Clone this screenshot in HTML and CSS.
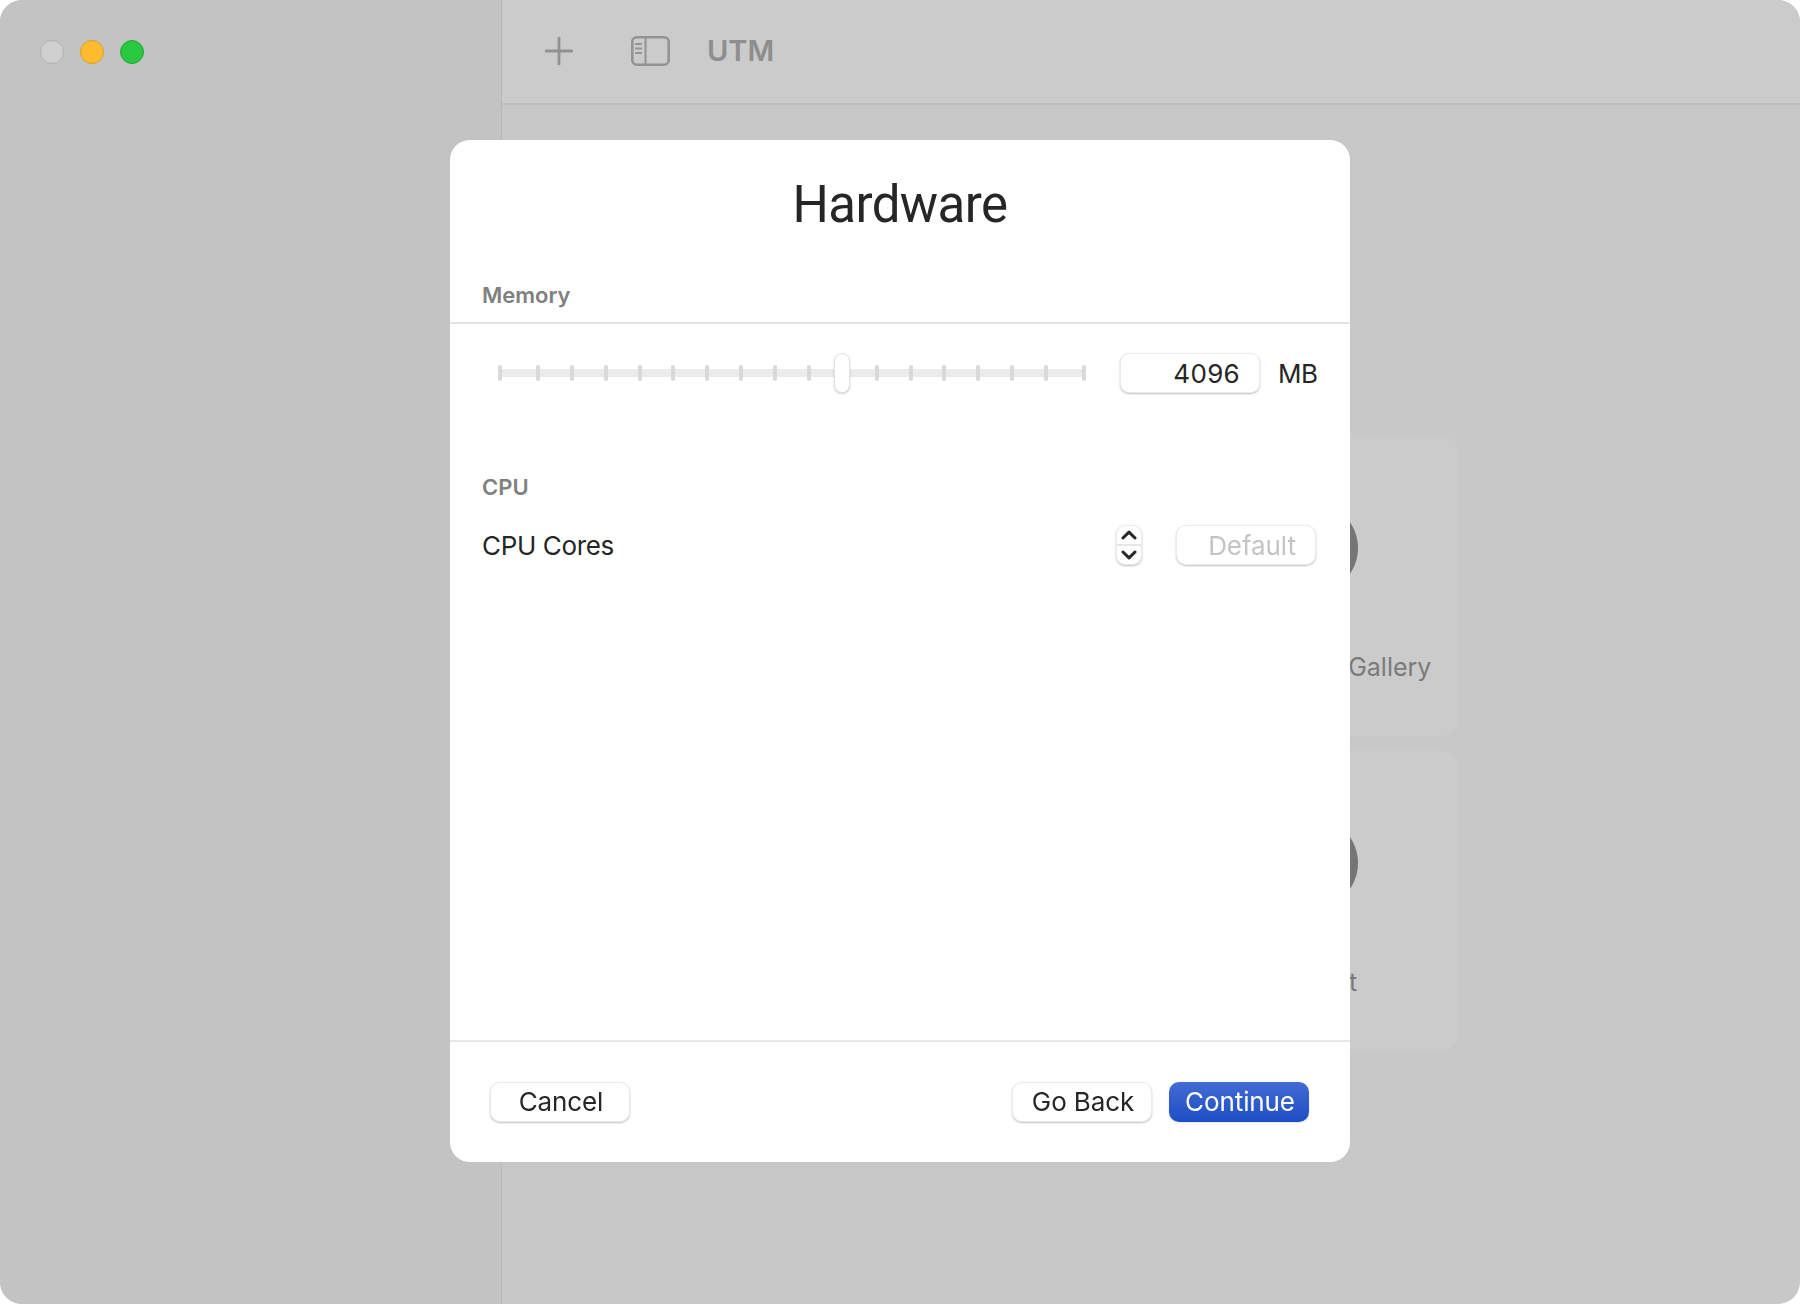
FILE: index.html
```html
<!DOCTYPE html>
<html lang="en">

<head>
    <meta charset="UTF-8">
    <title>UTM</title>
    <link rel="stylesheet" href="styles.css">
</head>

<body>

    <div class="window">
        <div class="sidebar">
            <div class="traffic">
                <span class="light light-gray"></span>
                <span class="light light-yellow"></span>
                <span class="light light-green"></span>
            </div>
        </div>

        <div class="main">
            <div class="toolbar">
                <svg class="icon-plus" width="28" height="28" viewBox="0 0 28 28">
                    <path d="M14 1V27M1 14H27" fill="none" stroke="#919191" stroke-width="2.8" stroke-linecap="round"/>
                </svg>
                <svg class="icon-sidebar" width="39" height="30" viewBox="0 0 39 30">
                    <rect x="1.3" y="1.3" width="36.4" height="27.4" rx="4.5" fill="none" stroke="#939393" stroke-width="2.6"/>
                    <path d="M14.5 1.5V28.5" stroke="#939393" stroke-width="2"/>
                    <path d="M5 8H10M5 12.5H10M5 17H10" stroke="#939393" stroke-width="2.2" stroke-linecap="round"/>
                </svg>
                <span class="toolbar-title">UTM</span>
            </div>

            <div class="content">
                <div class="card-grid">
                    <div class="card">
                        <div class="card-circle"></div>
                    </div>
                    <div class="card">
                        <div class="card-circle"></div>
                        <div class="card-label">Browse UTM Gallery</div>
                    </div>
                    <div class="card">
                        <div class="card-circle"></div>
                    </div>
                    <div class="card">
                        <div class="card-circle"></div>
                        <div class="card-label">Support</div>
                    </div>
                </div>
            </div>
        </div>
    </div>

    <!-- Wizard sheet -->
    <div class="overlay">
        <div class="modal">
            <h1 class="modal-title">Hardware</h1>

            <div class="section-label section-memory">Memory</div>
            <div class="memory-row">
                <div class="slider">
                    <div class="track">
                        <span class="tick"></span><span class="tick"></span><span class="tick"></span>
                        <span class="tick"></span><span class="tick"></span><span class="tick"></span>
                        <span class="tick"></span><span class="tick"></span><span class="tick"></span>
                        <span class="tick"></span><span class="tick"></span><span class="tick"></span>
                        <span class="tick"></span><span class="tick"></span><span class="tick"></span>
                        <span class="tick"></span><span class="tick"></span><span class="tick"></span>
                    </div>
                    <div class="thumb"></div>
                </div>
                <div class="field">4096</div>
                <span class="unit">MB</span>
            </div>

            <div class="section-label section-cpu">CPU</div>
            <div class="cpu-row">
                <span class="cpu-label">CPU Cores</span>
                <div class="stepper">
                    <div class="stepper-part">
                        <svg width="16" height="10" viewBox="0 0 16 10"><path d="M2 8L8 2.2L14 8" fill="none" stroke="#262626" stroke-width="3" stroke-linecap="round" stroke-linejoin="round"/></svg>
                    </div>
                    <div class="stepper-part stepper-down">
                        <svg width="16" height="10" viewBox="0 0 16 10"><path d="M2 2L8 7.8L14 2" fill="none" stroke="#262626" stroke-width="3" stroke-linecap="round" stroke-linejoin="round"/></svg>
                    </div>
                </div>
                <button class="btn btn-default">Default</button>
            </div>

            <div class="modal-footer">
                <button class="btn btn-cancel">Cancel</button>
                <div class="footer-right">
                    <button class="btn btn-back">Go Back</button>
                    <button class="btn btn-primary">Continue</button>
                </div>
            </div>
        </div>
    </div>

</body>

</html>
```

FILE: styles.css
```css
html, body {
    margin: 0;
    padding: 0;
    height: 1304px;
    background-color: #fff;
    font-family: Inter, "Liberation Sans", sans-serif;
    overflow: hidden;
}

.window {
    display: flex;
    height: 1304px;
    border-radius: 22px;
    overflow: hidden;
    background-color: #c8c8c8;
}

.sidebar {
    width: 501px;
    flex-shrink: 0;
    background-color: #c3c3c3;
    border-right: 1px solid #b8b8b8;
}

.traffic {
    display: flex;
    gap: 16px;
    padding: 40px 0 0 40px;
}

.light {
    width: 24px;
    height: 24px;
    border-radius: 50%;
    box-sizing: border-box;
}

.light-gray {
    background-color: #d0d0d0;
    border: 1px solid #b2b2b2;
}

.light-yellow {
    background-color: #febb2e;
    border: 1px solid #d99f2a;
}

.light-green {
    background-color: #28c83f;
    border: 1px solid #23a636;
}

.main {
    flex: 1;
    display: flex;
    flex-direction: column;
}

.toolbar {
    height: 105px;
    flex-shrink: 0;
    box-sizing: border-box;
    display: flex;
    align-items: center;
    background-color: #cbcbcb;
    border-bottom: 2px solid #bebebe;
    padding: 0 0 2px 43px;
}

.icon-sidebar {
    margin-left: 58px;
}

.toolbar-title {
    margin-left: 37px;
    color: #8e8e8e;
    font-size: 29px;
    font-weight: 600;
}

.content {
    flex: 1;
    display: flex;
    justify-content: center;
    padding-right: 3px;
}

.card-grid {
    display: grid;
    grid-template-columns: 294px 294px;
    grid-auto-rows: 300px;
    column-gap: 30px;
    row-gap: 15px;
    padding-top: 331px;
}

.card {
    display: flex;
    flex-direction: column;
    align-items: center;
    background-color: #cbcbcb;
    border-radius: 18px;
}

.card-circle {
    width: 92px;
    height: 92px;
    margin-top: 66px;
    border-radius: 50%;
    background-color: #757575;
}

.card-label {
    margin: 58px 3px 0 0;
    color: #7a7a7a;
    font-size: 25px;
    white-space: nowrap;
}

/* sheet on top of the window */
.overlay {
    position: fixed;
    inset: 0 0 2px 0;
    display: flex;
    align-items: center;
    justify-content: center;
}

.modal {
    width: 900px;
    height: 1022px;
    display: flex;
    flex-direction: column;
    background-color: #fff;
    border-radius: 20px;
    color: #262626;
}

.modal-title {
    margin: 0;
    padding-top: 34px;
    font-family: Roboto, sans-serif;
    font-size: 51px;
    font-weight: 400;
    letter-spacing: -0.6px;
    line-height: 62px;
    text-align: center;
}

.section-label {
    padding-left: 32px;
    color: #808080;
    font-size: 22px;
    font-weight: 600;
    line-height: 28px;
}

.section-memory {
    margin-top: 45px;
    padding-bottom: 13px;
    border-bottom: 2px solid #e4e4e4;
}

.memory-row {
    display: flex;
    align-items: center;
    padding: 29px 0 0 48px;
}

.slider {
    position: relative;
    flex: 0 0 588px;
}

.track {
    display: flex;
    align-items: center;
    justify-content: space-between;
    height: 8px;
    background-color: #ebebeb;
}

.tick {
    width: 4px;
    height: 16px;
    border-radius: 2px;
    background-color: #d9d9d9;
}

.tick:first-child {
    margin-right: 4px;
}

.tick:last-child {
    margin-left: 4px;
}

.thumb {
    position: absolute;
    left: 336px;
    top: -16px;
    width: 16px;
    height: 40px;
    box-sizing: border-box;
    background-color: #fff;
    border: 1px solid #e2e2e2;
    border-radius: 8px;
    box-shadow: 0 1px 2px rgba(0, 0, 0, 0.2);
}

.field {
    flex: 0 0 140px;
    height: 40px;
    margin-left: 34px;
    padding-right: 19px;
    box-sizing: border-box;
    background-color: #fff;
    border: 1px solid #ebebeb;
    border-radius: 9px;
    box-shadow: 0 1px 2px rgba(0, 0, 0, 0.25);
    font-size: 26px;
    letter-spacing: 0.3px;
    line-height: 40px;
    text-align: right;
}

.unit {
    margin-left: 18px;
    font-size: 26px;
    letter-spacing: -0.6px;
}

.section-cpu {
    margin-top: 80px;
}

.cpu-row {
    display: flex;
    align-items: center;
    margin-top: 24px;
    padding: 0 34px 0 32px;
}

.cpu-label {
    flex: 1;
    font-size: 26px;
    letter-spacing: -0.35px;
}

.stepper {
    width: 26px;
    height: 40px;
    box-sizing: border-box;
    display: flex;
    flex-direction: column;
    background-color: #fff;
    border: 1px solid #ebebeb;
    border-radius: 9px;
    box-shadow: 0 1px 2px rgba(0, 0, 0, 0.25);
}

.stepper-part {
    flex: 1;
    display: flex;
    align-items: center;
    justify-content: center;
}

.stepper-down {
    border-top: 2px solid #e6e6e6;
}

.btn {
    width: 140px;
    height: 40px;
    padding: 0 0 2px 2px;
    box-sizing: border-box;
    background-color: #fff;
    border: 1px solid #ebebeb;
    border-radius: 10px;
    box-shadow: 0 1px 2px rgba(0, 0, 0, 0.25);
    color: #262626;
    font-family: inherit;
    font-size: 26px;
    letter-spacing: -0.1px;
}

.btn-default {
    margin-left: 34px;
    padding: 0 0 0 12px;
    color: #c4c4c4;
}

.btn-primary {
    background: linear-gradient(#426bd3, #1e4ec5);
    border: none;
    box-shadow: 0 1px 2px rgba(30, 78, 197, 0.15);
    color: #fff;
}

.modal-footer {
    margin-top: auto;
    display: flex;
    justify-content: space-between;
    padding: 40px 41px 40px 40px;
    border-top: 2px solid #e8e8e8;
}

.footer-right {
    display: flex;
    gap: 17px;
}
```
